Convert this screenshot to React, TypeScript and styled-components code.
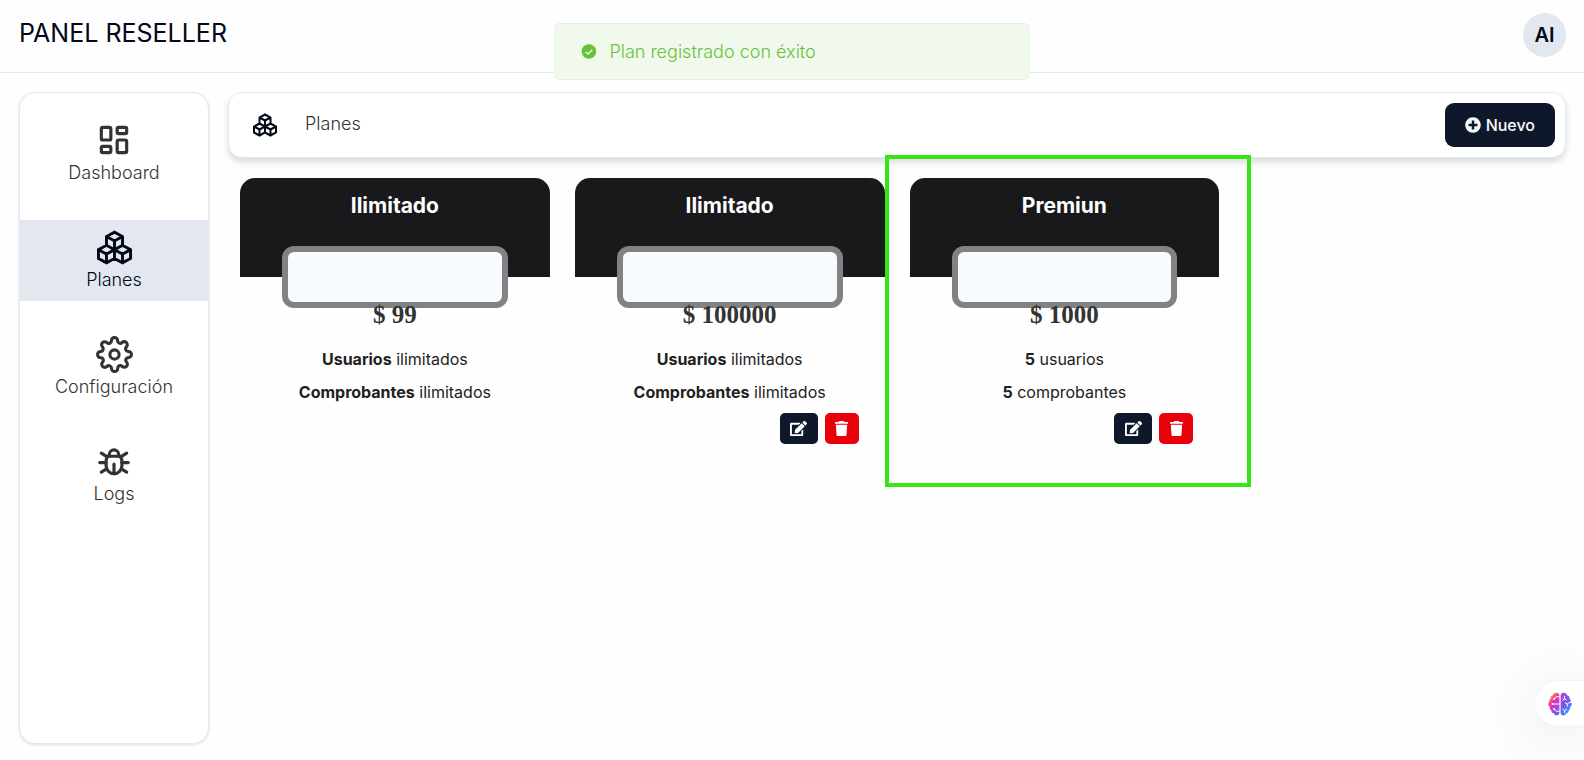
import React from 'react';
import styled, { createGlobalStyle } from 'styled-components';
import { TbBug, TbLayoutDashboard } from 'react-icons/tb';
import { FiSettings } from 'react-icons/fi';
import { GrCubes } from 'react-icons/gr';
import { FaTrash } from 'react-icons/fa6';
import { FaEdit, FaPlusCircle } from 'react-icons/fa';

const GlobalStyle = createGlobalStyle`
  *, *::before, *::after { box-sizing: border-box; }
  body {
    margin: 0;
    background: #fefefe;
    color: #020817;
    font-family: Inter, "Liberation Sans", sans-serif;
    font-size: 16px;
  }
  button { font: inherit; border: 0; cursor: pointer; }
  h1, h2, p, ul { margin: 0; padding: 0; }
`;

const Page = styled.div`
  display: flex;
  flex-direction: column;
  min-height: 100vh;
`;

const Header = styled.header`
  display: flex;
  align-items: flex-start;
  justify-content: space-between;
  height: 73px;
  padding: 13px 18px 0 19px;
  border-bottom: 1px solid #e2e8f0;
`;

const Brand = styled.h1`
  font-size: 25px;
  font-weight: 400;
  line-height: 40px;
`;

const Avatar = styled.button`
  width: 43px;
  height: 44px;
  padding: 0;
  border-radius: 50%;
  background: #e3e8f0;
  color: #020817;
  font-size: 20px;
  font-weight: 600;
`;

const Body = styled.div`
  flex: 1;
  display: flex;
  gap: 19px;
  padding: 19px 18px 16px 19px;
`;

const Sidebar = styled.nav`
  flex: 0 0 190px;
  padding: 20px 0;
  border: 1px solid #e2e8f0;
  border-radius: 16px;
  background: #fff;
  box-shadow: 0 1px 3px rgba(0, 0, 0, 0.12);
`;

const NavList = styled.ul`
  display: flex;
  flex-direction: column;
  gap: 26px;
  list-style: none;
`;

const NavLink = styled.a<{ $active?: boolean }>`
  display: flex;
  flex-direction: column;
  align-items: center;
  padding: 8px 0;
  background: ${(p) => (p.$active ? '#e3e8f0' : 'transparent')};
  color: ${(p) => (p.$active ? '#020817' : '#333')};
  font-size: 18px;
  font-weight: 350;
  line-height: 27px;
  text-decoration: none;
`;

const NavIcon = styled.span`
  display: flex;
  align-items: center;
  height: 38px;
`;

const Main = styled.main`
  flex: 1;
  min-width: 0;
`;

const Toolbar = styled.div`
  display: flex;
  align-items: center;
  padding: 10px 10px 10px 24px;
  border: 1px solid #e2e8f0;
  border-radius: 14px;
  background: #fff;
  box-shadow: 0 4px 6px rgba(0, 0, 0, 0.14);
`;

const ToolbarTitle = styled.h2`
  flex: 1;
  padding: 0 0 2px 28px;
  color: #333;
  font-size: 18px;
  font-weight: 350;
  line-height: 24px;
`;

const NewButton = styled.button`
  display: flex;
  align-items: center;
  gap: 5px;
  height: 44px;
  padding: 0 20px;
  border-radius: 9px;
  background: #0f172a;
  color: #f8fafc;
  font-weight: 500;
`;

const Plans = styled.div`
  display: grid;
  grid-template-columns: repeat(4, 1fr);
  gap: 25px;
  padding: 20px 12px;
`;

const Card = styled.article`
  position: relative;
  color: #212121;
  text-align: center;
`;

const CardTitle = styled.h2`
  height: 99px;
  padding-top: 13px;
  border-radius: 15px 15px 0 0;
  background: #19191b;
  color: #fff;
  font-size: 21px;
  font-weight: 700;
  line-height: 30px;
`;

const PriceFrame = styled.div`
  height: 62px;
  margin: -31px 42px 0;
  border: 6px solid #828282;
  border-radius: 12px;
  background: #f7fbff;
`;

const Price = styled.p`
  margin-top: -7px;
  color: #333;
  font-family: "Liberation Serif", serif;
  font-size: 25px;
  font-weight: 700;
  line-height: 28px;
`;

const Features = styled.ul`
  padding-top: 14px;
  list-style: none;
  line-height: 33px;
`;

const Actions = styled.div`
  display: flex;
  justify-content: flex-end;
  gap: 7px;
  padding: 4px 26px 0 0;
`;

const ActionButton = styled.button<{ $danger?: boolean }>`
  display: flex;
  align-items: center;
  justify-content: center;
  width: ${(p) => (p.$danger ? 34 : 38)}px;
  height: 31px;
  padding: 0;
  border-radius: 5px;
  background: ${(p) => (p.$danger ? '#e8000b' : '#0f172a')};
  color: #fff;
`;

const Highlight = styled.div`
  position: absolute;
  inset: -23px -32px -43px -25px;
  border: 4px solid #36e614;
  pointer-events: none;
`;

const Toast = styled.div`
  position: fixed;
  top: 23px;
  left: 50%;
  display: flex;
  align-items: center;
  gap: 13px;
  width: 30%;
  height: 57px;
  padding-left: 26px;
  transform: translateX(-50%);
  border: 1px solid #e1f3d8;
  border-radius: 5px;
  background: #f0f9eb;
  color: #67c23a;
  font-size: 18px;
  font-weight: 350;
`;

const Assistant = styled.button`
  position: fixed;
  right: 0;
  bottom: 34px;
  display: flex;
  align-items: center;
  width: 49px;
  height: 45px;
  padding: 0 0 0 13px;
  border-radius: 23px 0 0 23px;
  background: #fff;
  box-shadow: 0 0 3px rgba(0, 0, 0, 0.08), 0 10px 70px rgba(0, 0, 0, 0.13);
`;

const navItems = [
  { label: 'Dashboard', icon: <TbLayoutDashboard size={38} /> },
  { label: 'Planes', icon: <GrCubes size={35} />, active: true },
  { label: 'Configuración', icon: <FiSettings size={37} /> },
  { label: 'Logs', icon: <TbBug size={38} /> },
];

type Feature = { strong: string; rest: string };
type Plan = { name: string; price: string; features: Feature[]; editable?: boolean; highlighted?: boolean };

const unlimited: Feature[] = [
  { strong: 'Usuarios', rest: 'ilimitados' },
  { strong: 'Comprobantes', rest: 'ilimitados' },
];

const plans: Plan[] = [
  { name: 'Ilimitado', price: '99', features: unlimited },
  { name: 'Ilimitado', price: '100000', features: unlimited, editable: true },
  {
    name: 'Premiun',
    price: '1000',
    features: [
      { strong: '5', rest: 'usuarios' },
      { strong: '5', rest: 'comprobantes' },
    ],
    editable: true,
    highlighted: true,
  },
];

function SuccessIcon() {
  return (
    <svg width="15" height="15" viewBox="0 0 15 15" aria-hidden="true">
      <circle cx="7.5" cy="7.5" r="7.3" fill="#67c23a" />
      <path d="M4.2 7.8 6.6 10l4.3-4.3" fill="none" stroke="#f0f9eb" strokeWidth="1.3" />
    </svg>
  );
}

function BrainIcon() {
  return (
    <svg width="24" height="24" viewBox="0 0 24 24" aria-hidden="true">
      <defs>
        <linearGradient id="brainLeft" x1="0.2" y1="0" x2="0.8" y2="1">
          <stop offset="0.1" stopColor="#fb9a1e" />
          <stop offset="0.4" stopColor="#ee2fb4" />
          <stop offset="1" stopColor="#6c63f6" />
        </linearGradient>
        <linearGradient id="brainRight" x1="0" y1="0" x2="0.7" y2="1">
          <stop offset="0" stopColor="#c73fd6" />
          <stop offset="0.5" stopColor="#7a55f2" />
          <stop offset="1" stopColor="#1fa9fb" />
        </linearGradient>
      </defs>
      <path
        d="M11.4 3.2C11 1.3 9.7.6 8 .8 6.3 1 5.3 2 5 3.300 3.3 3.5 2.3 4.9 2.5 6.7 1.3 7.3 1 8.5 1.4 9.7.5 10.5.1 11.4.2 12.3c.1 1.1.7 2 1.6 2.5-.4 1.6.2 3 1.5 3.6 0 1.7 1 2.7 2.4 2.9.5 1.4 1.5 2.1 2.9 2.1 1.6 0 2.6-.8 2.8-2.3z"
        fill="url(#brainLeft)"
      />
      <path
        d="M12.6 3.2C13 1.3 14.3.6 16 .8c1.7.2 2.7 1.2 3 2.5 1.7.2 2.7 1.6 2.5 3.4 1.2.6 1.5 1.8 1.1 3 .9.8 1.3 1.7 1.2 2.6-.1 1.1-.7 2-1.6 2.500.4 1.6-.2 3-1.5 3.6 0 1.7-1 2.7-2.4 2.9-.5 1.4-1.5 2.1-2.9 2.1-1.6 0-2.6-.8-2.8-2.3z"
        fill="url(#brainRight)"
      />
      <g fill="none" stroke="#fff" strokeWidth="1" strokeLinecap="round" strokeLinejoin="round">
        <path d="M11.5 4.8H8.2L6.2 7M11.5 12H4.6M11.5 19.2H8.2L6.2 17" />
        <path d="M16.5 4.5v2.3M14.8 8l1.7-1.2L18.3 8M23 10.5h-1.7l-2 1.5v2.2M19.3 12l-2-1.3M14.8 17.2l1.8 1.3 2-1.3M16.6 18.5v2" />
      </g>
      <g fill="#fff">
        <circle cx="6.2" cy="7" r="0.9" />
        <circle cx="4.4" cy="12" r="0.9" />
        <circle cx="6.2" cy="17" r="0.9" />
      </g>
    </svg>
  );
}

function PlanCard({ plan }: { plan: Plan }) {
  return (
    <Card>
      <CardTitle>{plan.name}</CardTitle>
      <PriceFrame />
      <Price>$ {plan.price}</Price>
      <Features>
        {plan.features.map((f) => (
          <li key={f.rest + f.strong}>
            <strong>{f.strong}</strong> {f.rest}
          </li>
        ))}
      </Features>
      {plan.editable && (
        <Actions>
          <ActionButton aria-label="Editar plan">
            <FaEdit size={17} />
          </ActionButton>
          <ActionButton $danger aria-label="Eliminar plan">
            <FaTrash size={15} />
          </ActionButton>
        </Actions>
      )}
      {plan.highlighted && <Highlight />}
    </Card>
  );
}

export default function App() {
  return (
    <Page>
      <GlobalStyle />
      <Header>
        <Brand>PANEL RESELLER</Brand>
        <Avatar>AI</Avatar>
      </Header>
      <Body>
        <Sidebar>
          <NavList>
            {navItems.map((item) => (
              <li key={item.label}>
                <NavLink href="#" $active={item.active}>
                  <NavIcon>{item.icon}</NavIcon>
                  {item.label}
                </NavLink>
              </li>
            ))}
          </NavList>
        </Sidebar>
        <Main>
          <Toolbar>
            <GrCubes size={24} />
            <ToolbarTitle>Planes</ToolbarTitle>
            <NewButton>
              <FaPlusCircle size={16} />
              Nuevo
            </NewButton>
          </Toolbar>
          <Plans>
            {plans.map((plan) => (
              <PlanCard key={plan.name + plan.price} plan={plan} />
            ))}
          </Plans>
        </Main>
      </Body>
      <Toast role="status">
        <SuccessIcon />
        Plan registrado con éxito
      </Toast>
      <Assistant aria-label="Asistente">
        <BrainIcon />
      </Assistant>
    </Page>
  );
}
